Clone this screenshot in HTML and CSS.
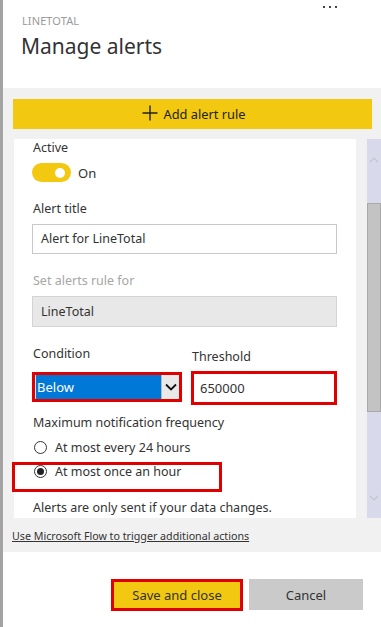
FILE: index.html
```html
<!DOCTYPE html>
<html>
<head>
<meta charset="utf-8">
<link rel="stylesheet" href="styles.css">
</head>
<body>
<div class="page">
  <header class="head">
    <div class="more"><span></span><span></span><span></span></div>
    <div class="kicker">LINETOTAL</div>
    <h1 class="title">Manage alerts</h1>
  </header>
  <main class="scroll">
    <button class="add-btn"><svg class="plus" width="16" height="16" viewBox="0 0 16 16"><path d="M8 0.5V15.5M0.5 8H15.5" stroke="#222" stroke-width="1.4" fill="none"/></svg><span>Add alert rule</span></button>
    <div class="row">
      <section class="card">
        <div class="label">Active</div>
        <div class="toggle-row"><span class="toggle"><span class="knob"></span></span><span class="toggle-text">On</span></div>
        <div class="label gap">Alert title</div>
        <div class="input">Alert for LineTotal</div>
        <div class="label gap muted">Set alerts rule for</div>
        <div class="input disabled">LineTotal</div>
        <div class="cols">
          <div class="col">
            <div class="label">Condition</div>
            <div class="select"><span class="select-val">Below</span><span class="select-arrow"><svg width="12" height="8" viewBox="0 0 12 8"><path d="M1 1.5L6 6.5L11 1.5" stroke="#111" stroke-width="1.8" fill="none"/></svg></span></div>
          </div>
          <div class="col">
            <div class="label lower">Threshold</div>
            <div class="threshold">650000</div>
          </div>
        </div>
        <div class="label freq">Maximum notification frequency</div>
        <div class="radio-row first"><span class="radio"></span><span>At most every 24 hours</span></div>
        <div class="highlight"><div class="radio-row"><span class="radio on"></span><span>At most once an hour</span></div></div>
        <div class="note">Alerts are only sent if your data changes.</div>
      </section>
      <div class="scrollbar">
        <svg class="sb-up" width="10" height="6" viewBox="0 0 10 6"><path d="M1 5L5 1L9 5" stroke="#c4c4cc" stroke-width="1.2" fill="none"/></svg>
        <div class="thumb"></div>
        <svg class="sb-down" width="10" height="6" viewBox="0 0 10 6"><path d="M1 1L5 5L9 1" stroke="#c4c4cc" stroke-width="1.2" fill="none"/></svg>
      </div>
    </div>
    <a class="flow" href="#">Use Microsoft Flow to trigger additional actions</a>
  </main>
  <footer class="foot">
    <button class="save">Save and close</button>
    <button class="cancel">Cancel</button>
  </footer>
</div>
</body>
</html>
```
FILE: styles.css
```css
* { box-sizing: border-box; }
html, body { margin: 0; padding: 0; }
body {
  width: 381px;
  height: 627px;
  overflow: hidden;
  background: #fff;
  font-family: "Noto Sans", "Open Sans", sans-serif;
  color: #333;
}
.page {
  height: 627px;
  border-left: 3px solid #a3a3a3;
  display: flex;
  flex-direction: column;
}
.head {
  height: 88px;
  position: relative;
  padding: 13px 0 0 19px;
}
.more {
  position: absolute;
  top: 6px;
  left: 320px;
  display: flex;
  gap: 4px;
}
.more span { width: 2px; height: 2px; background: #444; display: block; }
.kicker {
  font-size: 11px;
  line-height: 16px;
  color: #9a9a9a;
  letter-spacing: 0.1px;
}
.title {
  margin: 3px 0 0 -1px;
  font-size: 21px;
  line-height: 28px;
  font-weight: 400;
  color: #333;
}
.scroll {
  height: 464px;
  background: #f1f1f1;
  padding-top: 11px;
}
.add-btn {
  display: flex;
  align-items: center;
  justify-content: center;
  gap: 6px;
  margin-left: 10px;
  width: 359px;
  height: 30px;
  border: 0;
  background: #f2c811;
  font-family: inherit;
  font-size: 12.8px;
  color: #222;
  padding: 0 0 0 2px;
}
.plus { margin-top: -2px; }
.row {
  display: flex;
  margin-top: 10px;
  height: 379px;
}
.card {
  margin-left: 11px;
  width: 342px;
  height: 379px;
  background: #fff;
  padding: 0 19px 0 18px;
  font-size: 12.5px;
}
.label { line-height: 18px; padding-left: 1px; }
.label.gap { margin-top: 18px; }
.label.muted { color: #a6a6a6; }
.toggle-row {
  display: flex;
  align-items: center;
  margin-top: 6px;
  height: 19px;
}
.toggle {
  width: 39px;
  height: 19px;
  border-radius: 10px;
  background: #f2c811;
  position: relative;
  display: block;
}
.knob {
  position: absolute;
  width: 10px;
  height: 10px;
  border-radius: 50%;
  background: #fff;
  top: 4.5px;
  right: 6px;
}
.toggle-text { margin-left: 7px; font-size: 13px; }
.input {
  margin-top: 6px;
  height: 30px;
  border: 1px solid #c8c8c8;
  padding: 0 8px;
  line-height: 28px;
  background: #fff;
}
.input.disabled {
  background: #e8e8e8;
  border-color: #d4d4d4;
  height: 31px;
  line-height: 29px;
}
.cols {
  display: flex;
  gap: 9px;
  margin-top: 18px;
}
.col { display: flex; flex-direction: column; }
.col:first-child { width: 150px; }
.col:last-child { width: 146px; }
.label.lower { padding-top: 3px; }
.select {
  margin-top: 9px;
  height: 30px;
  border: 3px solid #e00000;
  display: flex;
  background: #0078d7;
}
.select-val {
  flex: 1;
  color: #fff;
  line-height: 24px;
  padding-left: 1px;
  border-left: 1px solid #cfe3f5;
  font-size: 13px;
}
.select-arrow {
  width: 18px;
  background: #e9e9e9;
  border-left: 1px solid #b9b9b9;
  display: flex;
  align-items: center;
  justify-content: center;
}
.threshold {
  margin-top: 5px;
  height: 34px;
  border: 3px solid #e00000;
  background: #fff;
  line-height: 28px;
  padding-left: 6px;
  font-size: 13px;
}
.label.freq { margin-top: 9px; }
.radio-row {
  display: flex;
  align-items: center;
  height: 18px;
  gap: 8px;
  padding-left: 2px;
}
.radio-row.first { margin-top: 6px; }
.radio {
  width: 13px;
  height: 13px;
  border: 1px solid #333;
  border-radius: 50%;
  background: #fff;
  position: relative;
  flex: none;
}
.radio.on::after {
  content: "";
  position: absolute;
  width: 7px;
  height: 7px;
  left: 2px;
  top: 2px;
  border-radius: 50%;
  background: #222;
}
.highlight {
  margin: 6px 0 0 -20px;
  width: 210px;
  height: 30px;
  border: 3px solid #e00000;
  padding: 0 0 0 17px;
}
.highlight .radio-row { height: 15px; margin-top: -1px; }
.note {
  margin-top: 7px;
  line-height: 18px;
  padding-left: 1px;
}
.scrollbar {
  margin-left: 11px;
  width: 14px;
  height: 379px;
  background: #d9d9ec;
  position: relative;
}
.sb-up { position: absolute; top: 18px; left: 2px; }
.sb-down { position: absolute; top: 356px; left: 2px; }
.thumb {
  position: absolute;
  top: 64px;
  left: 0;
  width: 14px;
  height: 209px;
  background: #c3c3c3;
  border: 1px solid #a8a8a8;
}
.flow {
  display: block;
  margin: 10px 0 0 9px;
  font-size: 10.7px;
  line-height: 16px;
  color: #333;
  text-decoration: underline;
}
.foot {
  flex: 1;
  display: flex;
  justify-content: flex-end;
  align-items: flex-start;
  gap: 6px;
  padding: 27px 18px 0 0;
}
.foot button {
  font-family: inherit;
  font-size: 13px;
  color: #333;
}
.save {
  width: 132px;
  height: 32px;
  border: 3px solid #e00000;
  background: #f2c811;
}
.cancel {
  width: 114px;
  height: 31px;
  border: 0;
  background: #cacaca;
}
```
